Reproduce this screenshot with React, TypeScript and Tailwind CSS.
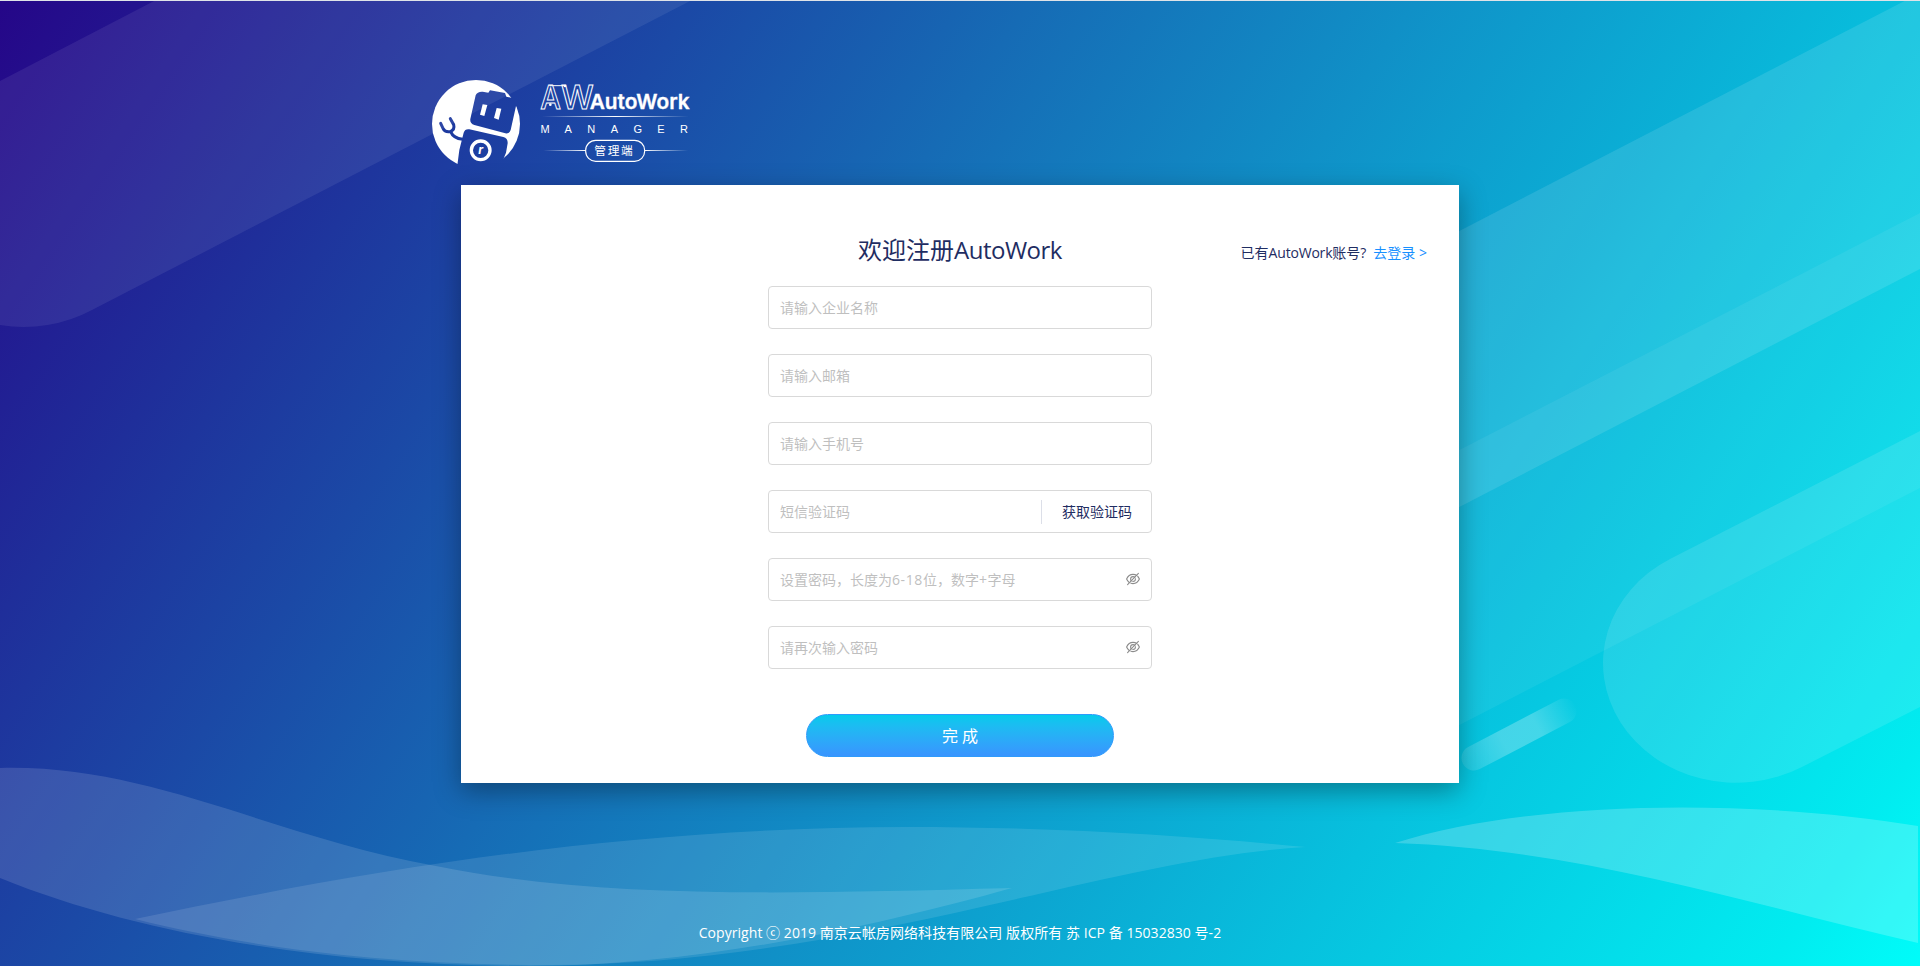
import React from "react";

function Backdrop() {
  return (
    <svg className="absolute inset-0 h-full w-full" viewBox="0 0 1920 966" preserveAspectRatio="none" aria-hidden="true">
      <defs>
        <linearGradient id="sky" gradientUnits="userSpaceOnUse" x1="0" y1="0" x2="1772" y2="1195">
          <stop offset="0" stopColor="#250688" />
          <stop offset="0.27" stopColor="#1b49a6" />
          <stop offset="0.4" stopColor="#166bb5" />
          <stop offset="0.55" stopColor="#1090c7" />
          <stop offset="0.75" stopColor="#07c1de" />
          <stop offset="0.94" stopColor="#01ecf0" />
          <stop offset="1" stopColor="#00fdfa" />
        </linearGradient>
        <linearGradient id="bar" gradientUnits="userSpaceOnUse" x1="1464" y1="763" x2="1576" y2="705">
          <stop offset="0" stopColor="#fff" stopOpacity="0.1" />
          <stop offset="0.35" stopColor="#fff" stopOpacity="0.25" />
          <stop offset="0.65" stopColor="#fff" stopOpacity="0.25" />
          <stop offset="1" stopColor="#fff" stopOpacity="0" />
        </linearGradient>
      </defs>
      <rect width="1920" height="966" fill="url(#sky)" />
      <g fill="#fff">
        <path fillOpacity="0.075" d="M156 0 L0 81 L0 325 A133 120 0 0 0 92 310 L692 0 Z" />
        <path fillOpacity="0.11" d="M1440 241 L1920 -7 L1920 269 L1440 517 Z" />
        <path fillOpacity="0.06" d="M1440 460 L1920 213 L1920 488 L1440 735 Z" />
        <path fillOpacity="0.11" d="M1920 431 L1670 559 A131 118 0 0 0 1802 767 L1920 707 Z" />
        <path fillOpacity="0.13" d="M0 768 C150 764 270 836 436 866 C600 899 780 894 1012 888 C880 925 700 966 530 966 C330 966 140 935 0 878 Z" />
        <path fillOpacity="0.11" d="M135 919 C380 868 620 828 906 827 C1060 827 1190 836 1306 847 C1110 858 850 965 550 965 C370 965 240 945 135 919 Z" />
        <path fillOpacity="0.2" d="M1395 843 C1530 800 1750 798 1918 826 L1918 943 C1750 904 1580 849 1395 843 Z" />
      </g>
      <path d="M1474 758 L1564 711" stroke="url(#bar)" strokeWidth="25" strokeLinecap="round" />
      <rect width="1920" height="1" fill="#dfe3e8" />
    </svg>
  );
}

function Logo() {
  const letters = ["M", "A", "N", "A", "G", "E", "R"];
  return (
    <svg className="h-[92px] w-[262px]" viewBox="36 24 786 276" role="img" aria-label="AutoWork Manager">
      <defs>
        <linearGradient id="rule" x1="0" x2="1" y1="0" y2="0">
          <stop offset="0" stopColor="#fff" stopOpacity="0" />
          <stop offset="0.5" stopColor="#fff" />
          <stop offset="1" stopColor="#fff" stopOpacity="0" />
        </linearGradient>
        <linearGradient id="ruleLeft" x1="0" x2="1" y1="0" y2="0">
          <stop offset="0" stopColor="#fff" stopOpacity="0" />
          <stop offset="1" stopColor="#fff" />
        </linearGradient>
        <linearGradient id="ruleRight" x1="0" x2="1" y1="0" y2="0">
          <stop offset="0" stopColor="#fff" />
          <stop offset="1" stopColor="#fff" stopOpacity="0" />
        </linearGradient>
        <mask id="robot" maskUnits="userSpaceOnUse" x="30" y="20" width="280" height="290">
          <circle cx="168" cy="162" r="132" fill="#fff" />
          <path d="M167 76 Q172 64 188 65 L205 68 L210 61 L255 69 L259 80 L310 92 L288 108 L272 180 Q268 192 256 190 L163 165 Q149 161 151 147 Z" fill="#000" />
          <path d="M131 188 Q135 176 148 178 L250 201 Q264 205 263 220 L258 248 L249 270 L240 310 L100 310 L112 286 L118 240 Z" fill="#000" />
          <path d="M62 160 L69 175 Q75 188 91 185 Q105 179 101 164 L91 146 M92 185 Q100 205 128 208" fill="none" stroke="#000" strokeWidth="9" strokeLinecap="round" />
          <path d="M188 103 L202 105 L193 138 L180 134 Z M230 114 L244 116 L236 149 L222 144 Z" fill="#fff" />
          <circle cx="182" cy="241" r="28" fill="none" stroke="#fff" strokeWidth="10" />
        </mask>
      </defs>
      <rect x="30" y="20" width="280" height="290" fill="#fff" mask="url(#robot)" />
      <g fill="#fff" className="font-['Inter',sans-serif]">
        <text x="175" y="253" fontSize="36" fontWeight="700" fontStyle="italic">r</text>
        <g fill="none" stroke="#fff" strokeWidth="3" fontSize="98" fontWeight="500">
          <text x="361" y="118" textLength="62" lengthAdjust="spacingAndGlyphs">A</text>
          <text x="423" y="118" textLength="98" lengthAdjust="spacingAndGlyphs">W</text>
          <path d="M388 47 H434" />
        </g>
        <circle cx="435" cy="48" r="4" />
        <circle cx="391" cy="104" r="4" />
        <text x="509" y="118" fontSize="62" fontWeight="600" stroke="#fff" strokeWidth="1" textLength="300" lengthAdjust="spacingAndGlyphs">AutoWork</text>
      </g>
      <g fill="#fff" className="font-['Liberation_Sans',sans-serif]">
        {letters.map((c, i) => (
          <text key={i} x={375 + i * 69.5} y="188" fontSize="33" textAnchor="middle">{c}</text>
        ))}
      </g>
      <rect x="366" y="138" width="440" height="3" fill="url(#rule)" />
      <rect x="370" y="240" width="127" height="3" fill="url(#ruleLeft)" />
      <rect x="674" y="240" width="130" height="3" fill="url(#ruleRight)" />
      <rect x="497" y="211" width="177" height="63" rx="30" fill="none" stroke="#fff" strokeWidth="3.5" />
      <text x="523" y="255" fontSize="35" letterSpacing="5" fill="#fff" className="font-['Noto_Sans_CJK_SC',sans-serif]">管理端</text>
    </svg>
  );
}

function EyeOff() {
  return (
    <svg className="size-[14px] -translate-y-px" viewBox="0 0 14 14" fill="none" stroke="#8c8c8c" strokeWidth="1.1" strokeLinecap="round" aria-hidden="true">
      <path d="M0.6 7 Q2.6 2.4 7 2.4 Q11.4 2.4 13.4 7 Q11.4 11.6 7 11.6 Q2.6 11.6 0.6 7 Z" />
      <circle cx="7" cy="7" r="2.4" />
      <path d="M1.6 12.6 L12.4 1.4" />
      <path d="M3.6 12 L12 3.3" stroke="#fff" strokeWidth="0.6" />
    </svg>
  );
}

function Field({ hint, children }: { hint: React.ReactNode; children?: React.ReactNode }) {
  return (
    <label className="flex h-[43px] w-96 items-center rounded border border-[#d9d9d9] bg-white pr-[11px] pl-[11px]">
      <span className="flex-1 text-sm text-[#bfbfbf]">{hint}</span>
      {children}
    </label>
  );
}

export default function App() {
  return (
    <div className="relative h-[966px] w-full overflow-hidden font-['Open_Sans','Noto_Sans_CJK_SC',sans-serif]">
      <Backdrop />
      <div className="relative flex h-full flex-col items-center pt-[78px]">
        <header className="h-[107px] w-[1056px]">
          <Logo />
        </header>
        <main className="flex h-[598px] w-[998px] flex-col items-center bg-white pt-[45px] shadow-[0_8px_25px_rgba(0,0,0,0.34)]">
          <div className="grid h-10 w-full grid-cols-[1fr_auto_1fr] items-center pr-8 text-[#1f2d62]">
            <span />
            <h1 className="pl-8 text-2xl">欢迎注册<span className="tracking-[-0.5px]">AutoWork</span></h1>
            <p className="flex justify-end gap-[7px] pt-1.5 text-sm whitespace-nowrap">
              <span>已有<span className="tracking-[-0.2px]">AutoWork</span>账号?</span>
              <a className="text-[#1890ff]">去登录 &gt;</a>
            </p>
          </div>
          <form className="mt-4 flex flex-col items-center gap-[25px]">
            <Field hint="请输入企业名称" />
            <Field hint="请输入邮箱" />
            <Field hint="请输入手机号" />
            <Field hint="短信验证码">
              <span className="h-6 w-px bg-[#dcdfe8]" />
              <span className="pr-2 pl-5 text-sm text-[#1f2d62]">获取验证码</span>
            </Field>
            <Field hint={<>设置密码，长度为<span className="tracking-[0.6px]">6-18</span>位，数字<span className="tracking-[0.6px]">+</span>字母</>}>
              <EyeOff />
            </Field>
            <Field hint="请再次输入密码">
              <EyeOff />
            </Field>
            <button type="button" className="mt-5 h-[43px] w-[308px] rounded-full border border-[#2f9bfb] bg-gradient-to-b from-[#03caec] to-[#3894ff] text-base text-white">
              完 成
            </button>
          </form>
        </main>
        <footer className="mt-[140px] text-sm leading-5 tracking-[0.05px] text-white">
          Copyright ⓒ 2019 南京云帐房网络科技有限公司 版权所有 苏 ICP 备 15032830 号-2
        </footer>
      </div>
    </div>
  );
}
